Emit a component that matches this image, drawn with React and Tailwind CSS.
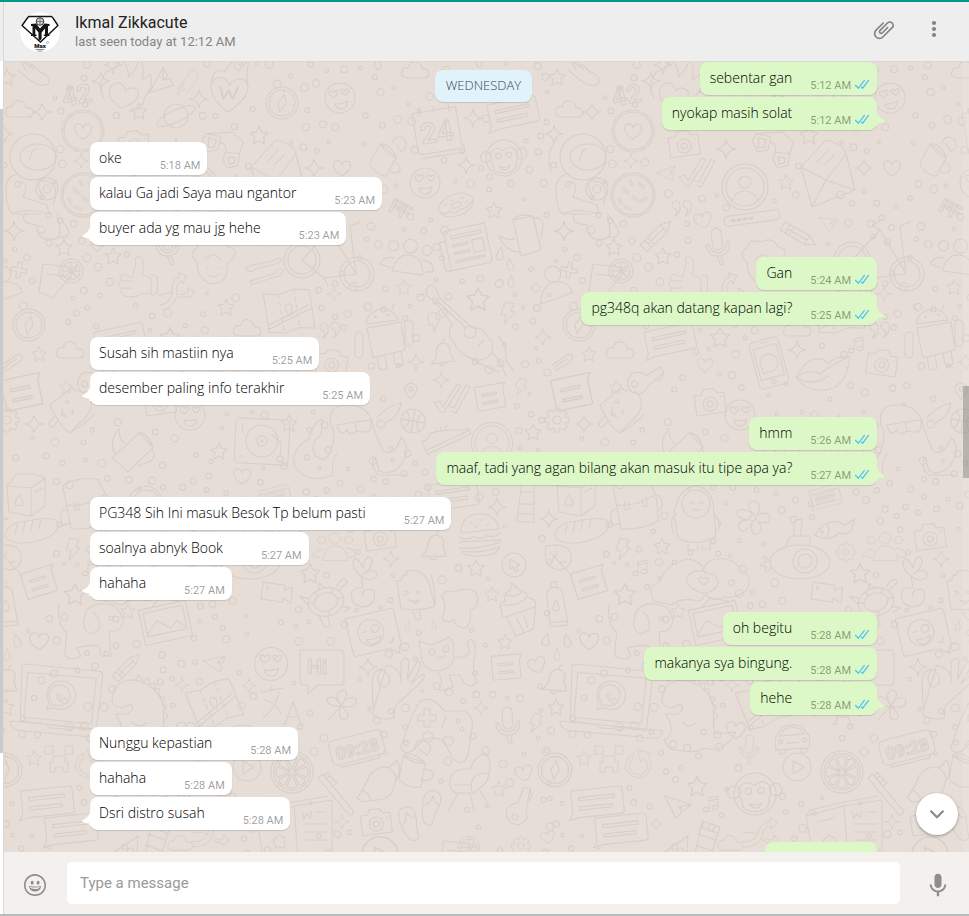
import { useState } from 'react';

const messageGroups = [
  {
    from: 'me',
    items: [
      { text: 'sebentar gan', time: '5:12 AM' },
      { text: 'nyokap masih solat', time: '5:12 AM' },
    ],
  },
  {
    from: 'them',
    items: [
      { text: 'oke', time: '5:18 AM' },
      { text: 'kalau Ga jadi Saya mau ngantor', time: '5:23 AM' },
      { text: 'buyer ada yg mau jg hehe', time: '5:23 AM' },
    ],
  },
  {
    from: 'me',
    items: [
      { text: 'Gan', time: '5:24 AM' },
      { text: 'pg348q akan datang kapan lagi?', time: '5:25 AM' },
    ],
  },
  {
    from: 'them',
    items: [
      { text: 'Susah sih mastiin nya', time: '5:25 AM' },
      { text: 'desember paling info terakhir', time: '5:25 AM' },
    ],
  },
  {
    from: 'me',
    items: [
      { text: 'hmm', time: '5:26 AM' },
      { text: 'maaf, tadi yang agan bilang akan masuk itu tipe apa ya?', time: '5:27 AM' },
    ],
  },
  {
    from: 'them',
    items: [
      { text: 'PG348 Sih Ini masuk Besok Tp belum pasti', time: '5:27 AM' },
      { text: 'soalnya abnyk Book', time: '5:27 AM' },
      { text: 'hahaha', time: '5:27 AM' },
    ],
  },
  {
    from: 'me',
    items: [
      { text: 'oh begitu', time: '5:28 AM' },
      { text: 'makanya sya bingung.', time: '5:28 AM' },
      { text: 'hehe', time: '5:28 AM' },
    ],
  },
  {
    from: 'them',
    items: [
      { text: 'Nunggu kepastian', time: '5:28 AM' },
      { text: 'hahaha', time: '5:28 AM' },
      { text: 'Dsri distro susah', time: '5:28 AM' },
    ],
  },
];

// --- WALLPAPER ---
const TILE_W = 550;
const TILE_H = 800;

const shapes = {
  star: <path d="M0-8L2.4-2.8 8-2 4 2 5 8 0 5.2-5 8-4 2-8-2-2.4-2.8Z" />,
  spark: <path d="M0-9Q1-1 9 0Q1 1 0 9Q-1 1-9 0Q-1-1 0-9Z" />,
  heart: <path d="M0 8C-14-1-8-9-3-7Q0-6 0-3Q1-7 5-7C11-6 10 2 0 8Z" />,
  drop: <path d="M0-7Q7 6 0 6Q-7 6 0-7Z" />,
  cloud: <path d="M-9 8Q-15 7-13 1Q-11-4-7-2Q-5-10 2-8Q7-6 7-1Q14-2 14 4Q13 8 9 8Z" />,
  bolt: <path d="M-3-11L6-9 3-2 7-1-4 11-2 2-7 1Z" />,
  music: <path d="M-3 6V-6L6-8V4M-3-3L6-5M-3 6A3 2 0 1 1-4 4M6 4A3 2 0 1 1 5 2" />,
  quotes: <path d="M-7 0A4 4 0 1 1-3-4Q-2 4-9 8Q-5 3-7 0ZM4-1A4 4 0 1 1 8-5Q9 3 2 7Q6 2 4-1Z" />,
  plus: <path d="M-2-8H2V-2H8V2H2V8H-2V2H-8V-2H-2Z" />,
  clip: <path d="M-10-3H8A3 3 0 0 1 8 4H-8A2 2 0 0 1-8 0H6" />,
  plane: <path d="M-14-8L14-4 8 3 2 0 6 6 1 12ZM2 0L14-4" />,
  pencil: <path d="M-20-5H8L18 0 8 5H-20ZM8-5V5M-14-5V5M-10-5V5M-14 0H8" />,
  bubble: (
    <>
      <path d="M-24-13H22Q25-13 25-10V10Q25 13 22 13H-18L-28 15-24 9Z" />
      <path d="M-17-6H17V-3H-17ZM-17 3H14V6H-17Z" />
    </>
  ),
  note: (
    <>
      <path d="M-15-12H16L13-7V12H-15Z" />
      <path d="M-9-4H6V-2H-9ZM-9 4H6V6H-9Z" />
    </>
  ),
  calendar: (
    <>
      <path d="M-22-20H22V18Q22 22 18 22H-18Q-22 22-22 18ZM-22-20V-14M-15-24V-17M0-24V-17M15-24V-17M-19 26H24V18" />
      <text x="-17" y="12" fontSize="29">24</text>
    </>
  ),
  monkey: (
    <>
      <circle r="20" />
      <circle cx="-20" cy="-3" r="6" />
      <circle cx="20" cy="-3" r="6" />
      <path d="M0-8C-12-18-19-3-13 5Q-14 16 0 17Q14 16 13 5C19-3 12-18 0-8Z" />
      <circle cx="-6" cy="-3" r="3" />
      <circle cx="6" cy="-3" r="3" />
      <path d="M-6 9Q0 12 6 9Q0 18-6 9Z" />
    </>
  ),
  astronaut: (
    <>
      <circle r="23" />
      <ellipse cx="5" rx="18" ry="13" />
      <path d="M-3 3Q-3-6 3-8M-16 17Q-28 20-27 35Q-26 54-20 57H8M-26-18Q-38-5-32 15M-20 57Q-8 50 16 57L14 48-10 40Q-3 25-14 25M10 40Q0 22 12 24Q28 26 20 48M-8 57Q-14 66 4 68Q4 84 18 82Q32 84 24 60M24 56L34 70Q40 82 24 80" />
      <circle cx="14" cy="32" r="11" />
      <circle cx="14" cy="32" r="4" />
    </>
  ),
  cookie: (
    <>
      <circle r="22" strokeDasharray="9 1" />
      <circle r="20" />
      <path d="M-9-6L-5-2M6-12L10-8M8 6L13 3M-8 12L-3 14M-14 4L-12 8M0 2L4 5M-3-14L-1-11" strokeWidth="4" strokeDasharray="none" opacity="0.5" />
    </>
  ),
  badge: (
    <>
      <circle r="21" strokeDasharray="7 2" />
      <circle r="19" />
      <path d="M0 8C-14-1-8-9-3-7Q0-6 0-3Q1-7 5-7C11-6 10 2 0 8Z" />
    </>
  ),
  lovely: (
    <>
      <circle r="15" />
      <path d="M-6-1C-13-6-9-9-7-8Q-5-7-5-6Q-4-9-2-8Q1-6-6-1ZM6-2C0-6 2-9 4-8Q6-7 6-6Q7-9 9-8Q12-6 6-2ZM-6 5Q0 7 7 4Q5 12 0 11Q-5 11-6 5Z" />
    </>
  ),
  donut: (
    <>
      <ellipse rx="20" ry="12" />
      <ellipse rx="6" ry="3" />
      <path d="M-20 0Q-15 8-9 4Q-3 10 3 6Q10 8 19 2M-12-3L-9-5M-4-7L-1-6M8-6L10-4M11 1L13 0" />
    </>
  ),
  camera: (
    <>
      <path d="M-15-8H-8L-5-13H5L8-8H15V12H-15Z" />
      <circle cy="2" r="7" />
      <circle cy="2" r="3" />
      <path d="M11-4H12" />
    </>
  ),
  glasses: (
    <>
      <path d="M-18-14L-3-13-4 0-14 4-21-6ZM4 2L18 1 18 13 8 17 2 9ZM-3-7Q4-8 4 2M-18-14L8-19 20-11M18 1L20-11" />
      <path d="M-15-10L-7-9-8-2-14 0ZM7 6H14V11L9 13Z" />
    </>
  ),
  envelope: (
    <>
      <path d="M-25-3L0-30Q18-26 20-16L29 20-14 37ZM-14 37L0 10 29 20M-25-3L0 10 20-16" />
      <path d="M-9-8L2-20M-2-5L8-15" />
    </>
  ),
  checks: <path d="M-18 5L-12 3-9 9 5-14 9-12-8 14-11 14ZM-3 8L2 10 14-13 18-11 4 15-1 13" />,
  person: (
    <>
      <circle r="23" />
      <circle r="19" />
      <circle cy="-5" r="6" />
      <path d="M-13 14Q-10 4 0 4Q10 4 13 14" />
    </>
  ),
  password: (
    <>
      <rect x="-28" y="-5" width="56" height="10" rx="4" />
      <path d="M-20 0H-18M-14 0H-12M-8 0H-6M-2 0H0" strokeWidth="3" />
    </>
  ),
  newspaper: (
    <>
      <path d="M-18-20H22V16Q22 20 18 20H-22Q-26 20-26 16V-10H-20V16Q-20 20-22 20M-18-20Q-20-20-20-16V16" />
      <path d="M-14-14H17V-11H-14ZM-14-5H2V-3H-14ZM-14 3H2V5H-14ZM-14 11H16V13H-14ZM6-6H17V7H6Z" />
    </>
  ),
  jug: <path d="M-12-18L8-22 16 12-4 18ZM-12-18Q-7-25 8-22M8-20Q18-22 18-12L16 0M-10 0Q-14 4-26-2-20 13-6 14" />,
  people: (
    <>
      <circle cy="-12" r="7" />
      <circle cx="-17" cy="-10" r="5" />
      <circle cx="17" cy="-10" r="5" />
      <path d="M-15 15Q-12-3 0-3Q14-3 16 15ZM-15 2Q-25 1-28 10L-17 12M14 0Q25 0 26 10L18 12" />
    </>
  ),
  mic: <path d="M-5-14A5 5 0 0 1 5-14V-2A5 5 0 0 1-5-2ZM-12-3Q-11 9 0 9Q11 9 12-4L9-4Q8 5 0 6Q-8 5-9-4ZM-2 9L0 18H3L2 9" />,
  thumb: <path d="M-2-3Q4-20 1-24Q6-29 10-22Q12-14 9-6L19-2V15H9Q4 20-10 18Q-17 15-14 9Q-20 4-14 1Q-18-6-10-6ZM19-6L26-4V15L19 17M-14 1H-2M-14 9H-2" />,
  baker: (
    <>
      <path d="M-16-2Q-26-10-16-16Q-14-26-2-22Q10-28 15-17Q26-16 20-6L14 1Q16 18 0 20Q-16 17-16-2Z" />
      <path d="M-8-4Q0-14 8-4M-6 4L-5 5M6 4L5 5M-5 11Q0 15 5 11" />
    </>
  ),
  bike: (
    <>
      <circle cx="-2" r="18" />
      <circle cx="-2" r="14" />
      <circle cx="53" cy="14" r="17" />
      <circle cx="53" cy="14" r="13" />
      <path d="M-2 0L26-30 52 14 20 18ZM26-30L18-35 28-40M52 14L46-34 56-38M20 18L24 26" />
    </>
  ),
  cocktail: (
    <>
      <path d="M-18-10L16-6-8 24-22 18ZM-14 0L8 3" />
      <circle cx="10" cy="-3" r="12" />
      <circle cx="10" cy="-3" r="9" />
      <path d="M1-3H19M10-12V6M4-9L16 3M16-9L4 3" />
    </>
  ),
  bust: (
    <>
      <circle cy="-16" r="8" />
      <path d="M-16 12Q-14-6 0-8Q14-8 17 5Z" />
    </>
  ),
  guitar: (
    <>
      <path d="M-44-42Q-40-50-35-44L-30-34 2-4Q15-5 18 6Q24 8 22 20Q14 32 0 26Q-14 20-16 10Q-24 4-18-8L-36-32Q-44-34-44-42Z" />
      <circle r="6" />
      <path d="M-34-32L-4-4M8 14L14 8M22 20Q30 28 36 44M28 4Q38 14 36 28L44 40M0 26Q16 36 30 40" />
    </>
  ),
  compass: (
    <>
      <circle r="16" />
      <circle r="13" />
      <circle cx="-8" cy="-18" r="4" />
      <path d="M1-9L4 0-1 9-4 0ZM0-12V-11M0 11V12M-12 0H-11M11 0H12" />
    </>
  ),
  bell: <path d="M-11 9Q-5 5-6-3Q-5-12 2-12Q9-11 8-2L12 6ZM-3 8Q0 14 5 7M1-12Q0-16 3-16" />,
  phone: (
    <>
      <rect x="-15" y="-24" width="30" height="48" rx="4" />
      <path d="M-12-17H12V15H-12ZM-3-21H3M-8 9Q-9 6-8 4A9 9 0 1 1-4 8Z" />
      <circle cy="19" r="2" />
    </>
  ),
  lips: <path d="M-28 6Q-18-14-6-13Q0-14 4-8Q10-16 26-16Q22 20-4 18Q-18 18-28 6ZM-28 6Q-16-4-4 2Q6-6 26-16M-26 7Q-8 14 4 4" />,
  android: (
    <>
      <path d="M-15-18Q-13-31 1-33Q14-32 17-22ZM-14-31L-18-37M11-32L13-38M-14-14L20-20 24 8-8 16ZM-4 15L-2 26Q2 30 6 26L4 13M12 11L14 22Q18 26 22 22L20 9" />
      <rect x="-26" y="-10" width="8" height="26" rx="4" />
      <rect x="24" y="-22" width="8" height="26" rx="4" />
      <path d="M-6-25H-5M7-27H8" strokeWidth="2" />
    </>
  ),
  map: (
    <>
      <path d="M-23-20L-8-17 8-20 23-17V22L8 19-8 22-23 19ZM-23 12L20-2M-23 16L22 2" />
      <path d="M-8-17V22M8-20V19" strokeDasharray="4 4" />
      <path d="M0 6Q-7-4 0-6Q7-4 0 6Z" />
    </>
  ),
  wrench: <path d="M-20-6L-12-8 14-8Q20-12 22-6L14-4-10-3Q-14 2-20-6ZM-18 9L12 6Q16 0 21 4Q18 11 12 10L-17 13Z" />,
  pin: (
    <>
      <path d="M0 8Q-12-5 0-8Q12-5 0 8Z" />
      <circle cy="-2" r="2" />
    </>
  ),
  ball: (
    <>
      <circle r="12" />
      <path d="M-12 0H12M0-12V12M-8-9Q0 0-8 9M8-9Q0 0 8 9" />
    </>
  ),
  shoe: <path d="M-24-4Q-16-2-12-8L6-3Q16 3 24 4V10H-24ZM-24 6H24M-8-6L-5-10M-3-5L0-9M2-4L5-8" />,
  gear: (
    <>
      <path d="M-2-12H2L3-8 7-10 10-7 8-3 12-2V2L8 3 10 7 7 10 3 8 2 12H-2L-3 8-7 10-10 7-8 3-12 2V-2L-8-3-10-7-7-10-3-8Z" />
      <circle r="4" />
    </>
  ),
  turntable: (
    <>
      <rect x="-27" y="-22" width="54" height="45" rx="4" />
      <circle r="16" />
      <circle r="5" />
      <circle r="1" />
      <path d="M10-6L19 0V14M-20-16V-8M-22 16H-18" />
      <circle cx="19" cy="17" r="3" />
    </>
  ),
  octopus: (
    <>
      <path d="M-24-6Q-28-26-8-26Q14-26 18-6Q22 8 28 20Q40 26 46 6Q56 16 48 30Q40 46 24 40L20 26M-24-6Q-18 4-24 20Q-30 34-40 24Q-46 12-34 4L-32-12Q-42-10-46 8Q-66 20-60 36Q-48 54-22 44M-22 44Q-24 30-18 22M20 26Q14 36 24 44H50M30-8Q44-14 46-28Q34-26 22-14" />
      <path d="M-18-6L0-9 2 0Q-6 6-8-2Q-14 8-18-6ZM0-9L16-11Q18 2 9 1L2 0" />
    </>
  ),
  burger: (
    <>
      <path d="M-18-4Q-16-22 0-22Q18-22 20-6ZM-20 0Q-12 5-6 0Q2 5 8 0Q16 3 22-2M-20 5H22M-20 11Q0 14 22 7M-18 14Q0 18 20 12Q18 20 0 20Q-16 20-18 14Z" />
      <path d="M-8-13H-6M2-16H4M8-11H10M-3-9H-1" />
    </>
  ),
  tower: <path d="M-8 22L-5-20H7L9 22ZM-6-8H8M-7 4H8M-7 14H9M-9-20H10L6-28H-4Z" />,
  carton: <path d="M-18-12L6-10 20-20V8L6 18-16 14ZM6-10V18M-18-12L-8-24 10-24 20-20M-6-3Q2 8-6 8Q-14 8-6-3ZM10-6L17-10" />,
  bread: <path d="M-26 6Q-26-8-4-10Q24-16 28-8Q28 4 6 10Q-18 16-26 6ZM-14-6L-16 3M-6-10L-8 1M2-11L0-1M10-12L8-2" />,
  backpack: <path d="M-22-24Q-4-32 14-26L20-10V16Q0 24-18 20ZM-20-4Q2 0 18-10M-22 0Q-30 2-26 16L-18 14M20-10Q28-8 24 4L20 6M-12-6V2H-8V-5M6-8V0H10V-9" />,
  girl: (
    <>
      <path d="M-16 24L-20 0Q-16-28 4-28Q20-24 20 0L22 22Q4 34-16 24ZM-18 0Q-26 6-20 20M20 0Q28 8 24 16" />
      <circle cx="2" cy="-10" r="14" />
      <path d="M-4-11Q-2-13 0-11M5-11Q7-13 9-11M-1-5Q3-2 6-5M-6 30V36H4V31M8 31V35H16V28" />
    </>
  ),
  flower: (
    <>
      <path d="M0-4Q-9-16 1-17Q10-14 4-3Q16-8 17 0Q16 8 5 3Q12 14 4 16Q-3 17-1 5Q-10 18-14 10Q-16 2-4 2Q-18 0-16-7Q-10-11 0-4Z" />
      <circle r="3" />
    </>
  ),
  submarine: (
    <>
      <ellipse cx="10" cy="4" rx="30" ry="17" />
      <circle cx="15" cy="3" r="12" />
      <circle cx="15" cy="3" r="7" />
      <path d="M-4-12L0-22H20V-12M4-22V-36L12-40V-36L10-22M-20 4Q-30-8-24 4Q-36 8-24 8Q-26 20-18 8" />
    </>
  ),
  fish: (
    <>
      <path d="M-20 6Q-6-14 10-4L20-10 16 2Q10 6 4 4Q-8 14-20 6ZM-8-6Q-4 0-8 8" />
      <circle cx="-13" cy="3" r="1" />
    </>
  ),
  leaf: <path d="M-12-14Q12-18 13-4Q14 8 2 10Q-16 8-12-14ZM-8-8L14 16M-2-3V-9M2 2H8M-4-5L-6 3" />,
  hands: (
    <>
      <path d="M-46 24Q-54 10-40 4Q-34-14-12-18Q2-16 4-6Q-10-8-14 2Q-10 14 4 16Q6 22-2 24Q-20 20-28 28ZM46 14Q54 0 42-6Q30-24 10-16Q0-8 6-4Q18-4 18 6Q16 14 6 16Q10 26 24 20Q34 22 46 14Z" />
      <path d="M4 8Q-4 2 1 0Q3 0 4 2Q6-1 8 1Q10 3 4 8Z" />
    </>
  ),
  turtle: (
    <>
      <ellipse rx="18" ry="14" />
      <ellipse rx="12" ry="9" />
      <path d="M16-8L26-14Q24-22 14-12M-16-8L-24-12-18-2M-10 12L-8 24H-2V14M14 8L22 12 14 14M-4-14L-2-20 2-14M-12-2L-18-4M12 0H18M0 9V14M-6-8L-8-12M7-7L10-11" />
    </>
  ),
  sprout: <path d="M-2-6Q-14-16-8-24Q-2-20 0-14Q2-28 8-24Q12-16 0-8Q14-16 14-6Q8 2-2-6L0 6Q-16 4-10 20Q0 30 10 20Q16 4 2 8Q-2 12 0 14" />,
  cursor: (
    <>
      <circle r="12" />
      <path d="M-4-6L6 0 2 1 4 6 1 7-1 2-4 4Z" />
    </>
  ),
  bottle: <path d="M-8-12Q-8-18 0-19Q8-18 8-12L10 20H-8ZM-3-19V-24H3V-19M0-6Q6 5 0 5Q-6 5 0-6ZM-8 16H10" />,
  dog: (
    <>
      <path d="M-30-22Q-32 0-22 6Q-24 20-24 30Q-16 36-8 30L-12 22Q0 18 10 20L12 30H22L20 6Q32 6 34-4Q32-20 18-22Q6-24-2-16Q-10 4 2 8L10 4Q12-8 4-14" />
      <circle cx="22" cy="-8" r="2" />
    </>
  ),
  photo: (
    <>
      <path d="M-24-16H24V20H-24ZM-20-12H20V12H-20ZM-20 10L-8-2 4 8 12 2 20 10M-10-16L0-24 18-16" />
    </>
  ),
  video: <path d="M-14-8H8V-3L16-7V9L8 5V9H-14ZM-10-3A1 1 0 1 1-8-3A1 1 0 1 1-10-3" />,
  wink: (
    <>
      <path d="M-24-20H22Q25-20 25-17V16Q25 19 22 19V26L12 19H-21Q-24 19-24 16Z" />
      <circle cx="-2" cy="-1" r="13" />
      <circle cx="3" cy="-4" r="4" />
      <path d="M-10-3H-6M-8 5Q0 7 7 4Q4 12-2 11Q-7 10-8 5ZM14 12L16 14 19 9" />
    </>
  ),
  icepop: <path d="M-16 14L-20-14Q-14-14-14-20Q-10-18-10-24Q10-28 14-4L18 10Q12 16-16 14ZM14-20Q18-8 18 10M-4 16L-1 24Q4 26 4 22L2 15M-12-4L-8-3-12 0M2-4L-1-3 3-1M-8 5Q-3 8 3 5M-4 6Q-2 12 1 6" />,
  blob: <path d="M-18 14Q-12 4-18-8Q-16-14-8-12Q16-20 18-6Q18 4 10 6Q12 22 4 24Q-6 22-6 16Q-14 20-18 14Z" />,
  cupcake: <path d="M-16-2Q-20-10-12-12Q-14-20-6-22L-4-30Q0-24 6-20Q12-18 10-14Q20-12 18-4L14 18-4 24-12 4Q-18 4-16-2ZM-12 4L18-4M-14-8Q2-6 10-14M-10-18Q0-14 6-20M-2 6L4 20M6 4L8 16" />,
  cat: (
    <>
      <path d="M-32-22L-20-18Q-8-22-2-26Q4-22 2-12Q6 4-12 8Q-30 8-30-10ZM4-6Q20-4 18-16Q14-22 20-24Q26-20 24-8Q20 10 26 20Q16 26 12 18L8 12H-2L2 24Q-8 30-12 26Q-6 18-14 8" />
      <circle cx="-19" cy="-11" r="3" />
      <circle cx="-5" cy="-14" r="3" />
      <path d="M-14-7Q-12-3-10-6Q-8-4-6-8" />
    </>
  ),
  hi: (
    <>
      <path d="M-22-16H18Q22-16 22-12V16Q22 19 18 19H-4L-14 28V19H-18Q-22 19-22 15Z" />
      <text x="-15" y="8" fontSize="21">Hi</text>
    </>
  ),
  laptop: (
    <>
      <path d="M-42-38Q-42-40-38-40L40-32Q43-31 43-28L36 30 -44 20ZM-36-31L36-25 31 23-40 16ZM-55 20L53 30Q52 40 42 38L-46 30Q-54 28-55 20ZM-16 24L-14 27 10 29 12 26" />
      <path d="M-16 8L-14 0A15 15 0 1 1-8 6Z" />
      <path d="M-12 4L-11 0A11 11 0 1 1-7 3ZM-5-9Q-7-1 4 2Q8 0 3-4L0-2-3-5Q0-8-5-9Z" />
    </>
  ),
  dino: <path d="M-28-6Q-28-28-6-28Q18-24 24 0Q22 20 26 26L46 24Q34 46 14 40Q6 46-14 42Q-22 42-26 32Q-16 28-20 14L-24 6-12 6Q-4 0-10-4Q-22 4-28-6ZM-4-28L-2-33 4-27 8-30 10-24 15-25 15-19 20-19 19-12 25-10 22-4 27-1 23 4 28 8 24 13M-8 14Q0 22 6 14" />,
  glyphA: <path d="M-20-14L2-18M-10-20L-9-16M-16-6Q-4-2 0 8M-2-14Q-6 4-18 12M4 18L12-4 20 18M8 11H17M1 18H7M17 18H23" />,
  clover: <path d="M0 0Q-14 2-14-8Q-6-12 0 0Q-8-14 2-16Q10-14 0 0Q6-12 15-7Q16 4 0 0Q12 10 4 14Q-4 14 0 0L-13 14" />,
  okhand: <path d="M-20 26L-22 6Q-26-12-14-14Q-4-8-6 0Q-12 8-16 0Q-20-6-14-14M-10-18Q6-16 6-2L4-22Q8-30 12-24L12-6 20-24Q26-26 22-14L16-2 26-12Q32-12 24-2L2 22V34Q-10 38-20 32Z" />,
  gamepad: (
    <>
      <path d="M-35 18Q-26-12-16-28Q-2-34 8-18L28-18Q38-14 36 0L32 26Q26 40 16 28L8 12Q-4 6-14 12L-24 22Q-34 26-35 18Z" />
      <path d="M-12-20H-6V-14H0V-8H-6V-2H-12V-8H-18V-14H-12ZM6-2L10-12" />
      <circle cx="-8" cy="8" r="5" />
      <circle cx="12" cy="12" r="5" />
      <circle cx="22" cy="-8" r="2" />
      <circle cx="26" cy="0" r="2" />
    </>
  ),
  clock: (
    <>
      <rect x="-27" y="-13" width="54" height="25" rx="5" />
      <path d="M-20 12V15H20V12" />
      <text x="-22" y="7" fontSize="17">09:28</text>
    </>
  ),
  croissant: <path d="M-22 14Q-12 0-10-8Q0-20 10-16L18-24Q24-12 16-2Q14 16-2 16L-16 18ZM-16 6Q-8 12-8 17M10-16Q20-8 16-2" />,
  mug: <path d="M-14-14L8-6 4 18Q-10 20-18 10ZM-14-14Q-4-18 8-6M-14-14Q-4-4 8-6M6 0Q18 0 16 8Q10 14 4 10M-2-20Q-2-30 8-28Q18-22 10-14L2-20" />,
  chair: <path d="M-20 0Q-18-14 0-12Q4-24 16-28Q24-16 16 2L4 12H-14Q-22 8-20 0ZM-12 12L-22 30M0 12L4 30M10 10L20 26M2 10Q-2-8 18-8M-16 4H0" />,
  key: (
    <>
      <path d="M6-22L12-20 8 2Q12 12 0 16Q-12 14-12 2Q-8-6 0-6ZM12-20L14-12 10-8" />
      <circle cx="-3" cy="8" r="3" />
    </>
  ),
  sandal: <path d="M-4-17Q10-20 8-4Q4 8 4 16Q-4 20-7 10Q-12-12-4-17ZM0-12Q-2-4-7-2M0-12Q4-4 8-4" />,
  brush: <path d="M-26-3H22Q26 0 22 3H-26ZM-24-3V-8H-10V-3M-20-8V-3M-15-8V-3" />,
  creeper: <path d="M-14-12H-6V-4H-14ZM6-12H14V-4H6ZM-6-2H6V4H9V14H4V9H-4V14H-9V4H-6Z" />,
  reload: <path d="M-6-14A14 14 0 1 0 10-10L14-14-2-18 2-4 6-8A10 10 0 1 1-6-9Z" />,
  orange: (
    <>
      <circle r="21" />
      <circle r="18" />
      <path d="M0-2L-5-14Q0-18 5-14ZM2-1L7-13Q12-14 13-8ZM2 0L14-5Q18 0 14 5ZM2 2L13 7Q13 13 7 13ZM0 2L5 14Q0 18-5 14ZM-2 2L-7 13Q-13 13-13 7ZM-2 0L-14 5Q-18 0-14-5ZM-2-1L-13-7Q-12-13-7-13Z" />
    </>
  ),
  play: (
    <>
      <circle r="14" />
      <path d="M-4-6L7 0-4 7Z" />
    </>
  ),
  car: (
    <>
      <path d="M-17 14V2L-10-8Q0-12 10-8L17 2V14ZM-12 0L-8-6Q0-9 8-6L12 0ZM-14 14V18H-8V14M8 14V18H14V14M-6 8H6" />
      <circle cx="-12" cy="6" r="2" />
      <circle cx="12" cy="6" r="2" />
    </>
  ),
  book: (
    <>
      <path d="M-38-12L0-22 38-28V24L2 30-30 34ZM0-22L4 30M-38-12L-34-18 0-26 34-32M8-16L10-9 13-15 16-10 18-17M22-16H32M10-4H33M11 4H33M12 12H33M-26-6L-10-10M-18 18Q-24 12-18 10Q-16 4-12 9Q-6 10-10 15Q-8 22-14 19Q-20 22-18 18Z" />
    </>
  ),
  arrows: <path d="M-24 12Q-8 14-4-2Q2-12 8-10V-15L16-9 9-2V-6Q0-4 0 4Q-4 18-22 18M-22 2Q-12 0-6 4M2 8Q8 12 12 8V4L18 11 10 16V13Q4 14 0 10" />,
  pizza: <path d="M-20 14L18-12 16 18ZM-14 10L12 12M4 2A3 3 0 1 1 5 2M10 6A3 3 0 1 1 11 6" />,
  sock: <path d="M-8 22L0-16 18-10 8 22ZM-2-10L15-4M-4-3L13 3M-6 8L10 14M2-15L0-10M8-13L6-8M13-11L11-6" />,
  swipe: <path d="M-18-10Q-12-14-4-4L-2-8 6 0Q18 4 14 12Q6 16-4 8L-16-2M-14-12L-8-2M-8-12L0-2" />,
  flames: <path d="M-20 22Q-32 12-26-4Q-18-10-16-20Q-6-14-4-6Q2-16 0-28Q8-22 10-8L16-16Q24-4 18 8Q22 20 8 26M-14 20Q-22 8-10 2Q-4 4-2 8Q2 0 10 4Q16 14-1 26Z" />,
  planet: (
    <>
      <circle r="12" />
      <ellipse rx="21" ry="6" transform="rotate(-25)" />
    </>
  ),
  bigHeart: (
    <>
      <path d="M0 22C-26 4-20-12-8-12Q-1-10 0-4Q3-12 12-12C24-8 20 8 0 22Z" />
      <path d="M-9-3L-5 9 0 0 4 9 9-4" strokeWidth="2" />
      <path d="M-18-8Q-16-22-6-18L2-30Q4-20 8-20L18-32Q16-20 18-8" />
    </>
  ),
};

// [shape, x, y, rotation, scale]
const doodles = [
  ['star', 7, 77, 0, 1], ['swipe', 34, 72, 0, 1], ['spark', 113, 65, 0, 1], ['spark', 101, 81, 0, 1],
  ['flames', 130, 84, 20, 1], ['plane', 162, 82, -70, 1], ['swipe', 187, 82, -90, 0.8], ['bigHeart', 229, 90, 4, 1],
  ['cloud', 415, 70, 0, 1], ['cloud', 19, 109, 0, 1], ['spark', 42, 112, 0, 1], ['badge', 83, 131, 0, 1],
  ['star', 139, 111, 0, 1], ['planet', 176, 116, 0, 1], ['spark', 199, 99, 0, 1], ['calendar', 437, 130, -9, 1],
  ['spark', 473, 118, 0, 1], ['bubble', 513, 113, -12, 1], ['spark', 554, 134, 0, 1], ['compass', 282, 103, 10, 1],
  ['lovely', 340, 98, -8, 1], ['monkey', 504, 158, -6, 0.9], ['astronaut', 33, 157, 0, 1], ['spark', 81, 161, 0, 0.8],
  ['cookie', 83, 195, 0, 1], ['spark', 466, 165, 0, 1], ['lovely', 425, 183, 0, 1], ['donut', 456, 205, -20, 0.9],
  ['star', 494, 210, 0, 1], ['camera', 134, 144, -8, 1], ['glasses', 222, 150, 8, 1], ['spark', 176, 149, 0, 1.1],
  ['star', 259, 135, 0, 1.1], ['envelope', 276, 170, 0, 1], ['checks', 147, 172, 0, 1], ['plane', 118, 173, -30, 0.7],
  ['person', 195, 187, 0, 1], ['star', 236, 182, 0, 0.9], ['spark', 314, 168, 0, 1], ['heart', 342, 168, 0, 1],
  ['mug', 388, 160, 20, 0.9], ['quotes', 133, 209, 0, 1], ['heart', 153, 220, -15, 1], ['password', 202, 218, -8, 1],
  ['pencil', 108, 234, -45, 1], ['pencil', 250, 236, 30, 1], ['plane', 279, 223, 0, 0.7], ['newspaper', 467, 247, -12, 1],
  ['jug', 525, 238, 0, 1], ['spark', 14, 231, 0, 1.1], ['people', 409, 258, 8, 1], ['drop', 500, 254, 10, 1],
  ['drop', 510, 265, -10, 0.9], ['drop', 511, 282, 0, 0.9], ['star', 64, 247, 0, 1], ['star', 113, 256, 0, 1],
  ['mic', 168, 247, -8, 1], ['thumb', 134, 280, 0, 0.9], ['baker', 213, 264, 0, 1], ['bike', 304, 260, 0, 1],
  ['cocktail', 61, 274, 0, 1], ['bust', 5, 290, -8, 1], ['plus', 19, 270, 10, 1], ['star', 404, 287, 0, 0.9],
  ['star', 478, 299, 0, 1.4], ['arrows', 176, 288, -20, 0.9], ['guitar', 470, 332, 0, 1], ['bolt', 508, 313, 0, 1],
  ['bolt', 434, 322, -20, 0.9], ['compass', 29, 325, 8, 1], ['bell', 442, 355, 0, 1], ['spark', 416, 362, 0, 0.9],
  ['spark', 543, 337, 0, 0.9], ['spark', 441, 380, 0, 0.9], ['star', 39, 354, 0, 0.9], ['clip', 12, 362, -35, 1],
  ['cloud', 70, 350, 0, 1], ['bubble', 120, 340, -12, 1], ['star', 170, 337, 0, 1.2], ['phone', 219, 363, -15, 1],
  ['lips', 274, 372, 0, 1], ['music', 307, 345, 0, 1], ['spark', 247, 350, 0, 1], ['heart', 155, 365, 0, 0.9],
  ['camera', 332, 363, 8, 1], ['android', 381, 342, 0, 1], ['quotes', 331, 331, 0, 1], ['map', 289, 310, -9, 1],
  ['star', 226, 307, 0, 1], ['cloud', 247, 328, 0, 1], ['spark', 334, 294, 0, 0.8], ['wrench', 264, 270, -12, 0.9],
  ['checks', 452, 398, 0, 1], ['note', 491, 397, -10, 1], ['bolt', 521, 387, 10, 0.8], ['pin', 411, 391, 0, 1],
  ['note', 23, 392, -12, 1.3], ['key', 92, 380, 40, 1], ['star', 66, 387, 0, 0.8], ['ball', 413, 421, 10, 1],
  ['shoe', 445, 435, -25, 1], ['person', 492, 443, 0, 0.9], ['gear', 7, 420, 0, 1], ['star', 533, 432, 0, 1],
  ['spark', 34, 424, 0, 1], ['icepop', 70, 412, 60, 1], ['turntable', 262, 441, 3, 1], ['star', 289, 423, 0, 1],
  ['octopus', 355, 431, 0, 1], ['bubble', 275, 495, -15, 0.6], ['heart', 242, 476, 0, 1], ['star', 219, 451, 0, 1],
  ['camera', 160, 402, -8, 1], ['jug', 130, 452, 60, 1], ['lovely', 190, 415, 0, 1], ['bubble', 453, 495, -8, 1],
  ['burger', 479, 536, -3, 1], ['tower', 526, 500, 3, 1], ['spark', 497, 507, 0, 1], ['spark', 549, 519, 0, 1],
  ['carton', 25, 498, 0, 1], ['bread', 31, 531, 0, 1], ['backpack', 87, 507, -6, 1], ['girl', 144, 514, 0, 1],
  ['flower', 203, 518, 0, 1], ['fish', 285, 529, 0, 1], ['submarine', 240, 558, 0, 1], ['bubble', 276, 499, -14, 0.6],
  ['camera', 380, 537, -8, 1], ['people', 335, 548, 0, 0.8], ['star', 112, 546, 0, 1], ['bolt', 73, 549, 0, 1],
  ['leaf', 8, 560, 0, 1], ['hands', 150, 577, 0, 1], ['gear', 296, 552, 0, 0.8], ['star', 310, 573, 0, 1.2],
  ['spark', 391, 559, 0, 0.9], ['turtle', 326, 602, -15, 1], ['sprout', 363, 582, 0, 1], ['note', 40, 582, -17, 1.1],
  ['music', 91, 568, 0, 1], ['bell', 434, 548, 8, 1.1], ['cursor', 514, 565, 0, 1], ['star', 476, 568, 0, 1],
  ['bottle', 6, 606, -6, 1], ['star', 75, 594, 0, 1.3], ['dog', 89, 626, 0, 1], ['star', 128, 611, 0, 0.9],
  ['photo', 165, 621, -12, 1], ['video', 276, 592, 8, 1], ['wink', 373, 633, -13, 1], ['icepop', 417, 595, 0, 1],
  ['blob', 460, 604, 0, 1], ['cupcake', 518, 612, -5, 1], ['star', 492, 594, 0, 0.9], ['star', 505, 642, 0, 0.9],
  ['drop', 408, 626, 15, 0.7], ['drop', 434, 625, -10, 0.7], ['drop', 546, 640, 15, 1], ['drop', 17, 641, -15, 1],
  ['drop', 7, 655, 0, 0.9], ['heart', 39, 641, 0, 1.1], ['cat', 451, 663, 0, 1], ['hi', 322, 666, 0, 1],
  ['note', 507, 667, -5, 1], ['heart', 537, 665, -20, 1], ['bell', 5, 682, 12, 1.1], ['star', 6, 707, 0, 1],
  ['laptop', 62, 702, 0, 0.95], ['dino', 140, 708, 0, 1], ['map', 214, 703, -22, 1], ['lovely', 271, 664, 0, 1.1],
  ['glyphA', 281, 706, 0, 1], ['clover', 341, 706, 0, 1], ['spark', 368, 667, 0, 1], ['okhand', 395, 684, 5, 1],
  ['gamepad', 436, 729, 0, 1], ['mic', 508, 726, -4, 1], ['bolt', 536, 723, 10, 0.9], ['spark', 481, 708, 0, 0.8],
  ['spark', 182, 685, 0, 0.8], ['spark', 249, 686, 0, 0.8], ['pencil', 128, 666, -45, 0.9], ['plane', 216, 663, -20, 0.8],
  ['clock', 357, 748, -14, 1], ['croissant', 379, 784, 0, 1], ['mug', 417, 769, 0, 1], ['chair', 470, 781, 0, 1],
  ['key', 518, 809, 0, 1], ['compass', 5, 770, 0, 1.05], ['creeper', 59, 758, 0, 1], ['star', 34, 758, 0, 0.9],
  ['reload', 89, 766, 0, 0.9], ['heart', 524, 773, -15, 1], ['star', 499, 789, 0, 0.9], ['sandal', 431, 808, 10, 1],
  ['sandal', 410, 824, -20, 1], ['camera', 376, 822, -8, 1], ['brush', 337, 796, 50, 1], ['spark', 342, 822, 0, 0.8],
  ['orange', 292, 772, 0, 1], ['play', 247, 767, 0, 1], ['mic', 199, 750, 4, 0.8], ['car', 242, 735, -4, 1],
  ['heart', 186, 730, 0, 1.1], ['monkey', 205, 794, -4, 1.05], ['star', 147, 786, 0, 1.2], ['bubble', 47, 802, -6, 1.05],
  ['bubble', 71, 829, -6, 1.05], ['plane', 127, 806, 10, 1], ['music', 162, 804, 0, 1], ['book', 294, 828, 0, 1],
  ['arrows', 213, 831, 0, 0.9], ['cloud', 180, 843, 0, 0.9], ['pizza', 120, 848, 0, 1], ['sock', 152, 837, 0, 1],
  ['cocktail', 460, 850, 0, 0.9], ['play', 380, 855, 0, 1.3], ['gear', 521, 846, 0, 0.8], ['heart', 548, 837, -15, 0.8],
];

// small bubbles that fill the room between the doodles
function scatterDots() {
  const dots = [];
  let seed = 7;
  const next = () => {
    seed = (seed * 16807) % 2147483647;
    return seed / 2147483647;
  };
  for (let i = 0; i < 2600; i++) {
    const x = next() * TILE_W;
    const y = 62 + next() * TILE_H;
    const r = 1.5 + next() * 2.5;
    const tooClose =
      doodles.some(([name, dx, dy, , s]) => {
        const small = ['star', 'spark', 'heart', 'drop', 'bolt', 'music', 'plus', 'quotes', 'pin'].includes(name);
        return Math.hypot(dx - x, dy - y) < (small ? 13 : 26) * s;
      }) || dots.some((d) => Math.hypot(d.x - x, d.y - y) < 12);
    if (!tooClose) dots.push({ x, y, r });
  }
  return dots;
}

const dots = scatterDots();

function Wallpaper() {
  return (
    <svg className="absolute inset-0 h-full w-full" aria-hidden="true">
      <defs>
        <g id="doodles" fontFamily="Roboto, sans-serif" fontWeight="700">
          {doodles.map(([name, x, y, rot, s], i) => (
            <g key={i} transform={`translate(${x} ${y}) rotate(${rot}) scale(${s})`}>
              {shapes[name]}
            </g>
          ))}
          <text x="62" y="104" fontSize="26" transform="rotate(-10 78 96)">42</text>
          <text x="390" y="216" fontSize="20" transform="rotate(28 400 208)">FF</text>
          {dots.map((d, i) => (
            <circle key={i} cx={d.x} cy={d.y} r={d.r} />
          ))}
        </g>
        <pattern id="wallpaper" width={TILE_W} height={TILE_H} patternUnits="userSpaceOnUse" patternTransform="translate(-4 0)">
          <g fill="none" stroke="#d8cfc8" strokeWidth="1.100" strokeLinejoin="round" strokeLinecap="round" transform="translate(0 -62)">
            <use href="#doodles" x={-TILE_W} />
            <use href="#doodles" />
            <use href="#doodles" x={TILE_W} />
          </g>
        </pattern>
      </defs>
      <rect width="100%" height="100%" fill="url(#wallpaper)" />
    </svg>
  );
}

// --- ICONS ---
function Avatar() {
  return (
    <svg viewBox="0 0 40 40" className="size-10 shrink-0 rounded-full" role="img" aria-label="Ikmal Zikkacute">
      <circle cx="20" cy="20" r="20" fill="#fefefe" />
      <path d="M8.500 4.500H32L38 13.500 20.500 30 2 13.500Z" fill="none" stroke="#141414" strokeWidth="1.500" />
      <path d="M11 12L16 11.500 20 16.500 24.500 11.500 29.500 12V14H28V22.500H29.500V24H23.800V22.500H25V16.500L21.600 20.500V27L20 28.500 18.500 27V20.500L15.300 16.500V22.500H16.500V24H11V22.500H12.500V14H11Z" fill="#141414" />
      <circle cx="20" cy="9.500" r="3.800" fill="#d8d8d8" stroke="#333" strokeWidth="1" />
      <path d="M20 6V13M16.500 9.500H23.500" stroke="#555" strokeWidth="0.700" />
      <text x="20" y="36" textAnchor="middle" fontSize="6" fontWeight="900" fontFamily="Roboto, sans-serif" fill="#141414">Max</text>
      <path d="M15.500 37.500H24.500M17.500 39H22.500" stroke="#777" strokeWidth="0.800" />
      <circle cx="27.500" cy="30.500" r="1" fill="none" stroke="#777" strokeWidth="0.500" />
    </svg>
  );
}

function ClipIcon() {
  return (
    <svg viewBox="0 0 24 24" className="size-6" fill="currentColor" aria-hidden="true">
      <path d="M1.816 15.556v.002c0 1.502.584 2.912 1.646 3.972s2.472 1.647 3.974 1.647a5.58 5.58 0 0 0 3.972-1.645l9.547-9.548c.769-.768 1.147-1.767 1.058-2.817-.079-.968-.548-1.927-1.319-2.698-1.594-1.592-4.068-1.711-5.517-.262l-7.916 7.915c-.881.881-.792 2.25.214 3.261.959.958 2.423 1.053 3.263.215l5.511-5.512c.28-.28.267-.722.053-.936l-.244-.244c-.191-.191-.567-.349-.957.04l-5.506 5.506c-.18.18-.635.127-.976-.214-.098-.097-.576-.613-.213-.973l7.915-7.917c.818-.817 2.267-.699 3.23.262.5.501.802 1.1.849 1.685.051.573-.156 1.111-.589 1.543l-9.547 9.549a3.97 3.97 0 0 1-2.829 1.171 3.975 3.975 0 0 1-2.83-1.173 3.973 3.973 0 0 1-1.172-2.828c0-1.071.415-2.076 1.172-2.83l7.209-7.211c.157-.157.264-.579.028-.814L11.5 4.36a.572.572 0 0 0-.834.018l-7.205 7.207a5.577 5.577 0 0 0-1.645 3.971z" />
    </svg>
  );
}

function MenuIcon() {
  return (
    <svg viewBox="0 0 24 24" className="size-6" fill="currentColor" aria-hidden="true">
      <circle cx="12" cy="5" r="2.100" />
      <circle cx="12" cy="11" r="2.100" />
      <circle cx="12" cy="17" r="2.100" />
    </svg>
  );
}

function SmileyIcon() {
  return (
    <svg viewBox="0 0 24 24" className="size-6" fill="currentColor" aria-hidden="true">
      <path d="M9.153 11.603c.795 0 1.439-.879 1.439-1.962s-.644-1.962-1.439-1.962-1.439.879-1.439 1.962.644 1.962 1.439 1.962zm-3.204 1.362c-.026-.307-.131 5.218 6.063 5.551 6.066-.25 6.066-5.551 6.066-5.551-6.078 1.416-12.129 0-12.129 0zm11.363 1.108s-.669 1.959-5.051 1.959c-3.505 0-5.388-1.164-5.607-1.959 0 0 5.912 1.055 10.658 0zM11.804 1.011C5.609 1.011.978 6.033.978 12.228s4.826 10.761 11.021 10.761S23.02 18.423 23.02 12.228c.001-6.195-5.021-11.217-11.216-11.217zM12 21.354c-5.273 0-9.381-3.886-9.381-9.159s3.942-9.548 9.215-9.548 9.548 4.275 9.548 9.548c-.001 5.272-4.109 9.159-9.382 9.159zm3.108-9.751c.795 0 1.439-.879 1.439-1.962s-.644-1.962-1.439-1.962-1.439.879-1.439 1.962.644 1.962 1.439 1.962z" />
    </svg>
  );
}

function MicIcon() {
  return (
    <svg viewBox="0 0 24 24" className="size-6" fill="currentColor" aria-hidden="true">
      <path d="M11.999 14.942c2.001 0 3.531-1.53 3.531-3.531V4.35c0-2.001-1.53-3.531-3.531-3.531S8.469 2.35 8.469 4.35v7.061c0 2.001 1.53 3.531 3.53 3.531zm6.238-3.53c0 3.531-2.942 6.002-6.237 6.002s-6.237-2.471-6.237-6.002H3.761c0 4.001 3.178 7.297 7.061 7.885v3.884h2.354v-3.884c3.884-.588 7.061-3.884 7.061-7.885h-2z" />
    </svg>
  );
}

function ReadTicks() {
  return (
    <svg viewBox="0 0 16 15" className="h-[15px] w-4" fill="#4fc3f7" role="img" aria-label="Read">
      <path d="M15.01 3.316l-.478-.372a.365.365 0 0 0-.51.063L8.666 9.879a.32.32 0 0 1-.484.033l-.358-.325a.319.319 0 0 0-.484.032l-.378.483a.418.418 0 0 0 .036.541l1.32 1.266c.143.14.361.125.484-.033l6.272-8.048a.366.366 0 0 0-.064-.512zm-4.1 0l-.478-.372a.365.365 0 0 0-.51.063L4.566 9.879a.32.32 0 0 1-.484.033L1.891 7.769a.366.366 0 0 0-.515.006l-.423.433a.364.364 0 0 0 .006.514l3.258 3.185c.143.14.361.125.484-.033l6.272-8.048a.365.365 0 0 0-.063-.51z" />
    </svg>
  );
}

function Bubble({ message, mine, last }) {
  return (
    <div
      className={`relative flex h-[33px] w-fit rounded-lg pr-[7px] shadow-[0_1px_1px_rgba(0,0,0,0.13)] ${
        mine ? 'gap-[18px] self-end bg-[#dcf8c6] pl-[10px]' : 'gap-[38px] bg-white pl-[9px]'
      }`}
    >
      {last && (
        <svg
          viewBox="0 0 9 14"
          className={`absolute bottom-1 h-[14px] w-[9px] ${mine ? '-right-2 text-[#dcf8c6]' : '-left-2 -scale-x-100 text-white'}`}
          fill="currentColor"
          aria-hidden="true"
        >
          <path d="M0 0H1Q2.500 6 9 8.500Q9 10.500 2 11.500L1 14H0Z" />
        </svg>
      )}
      <p className="font-['Open_Sans',sans-serif] text-[14px] font-light leading-8 text-black">{message.text}</p>
      <span className="flex items-end gap-[3px] pb-[3px] font-['Roboto',sans-serif] text-[11px] leading-[13px] text-black/40">
        <time>{message.time}</time>
        {mine && <ReadTicks />}
      </span>
    </div>
  );
}

export default function App() {
  const [draft, setDraft] = useState('');

  return (
    <div className="flex h-screen flex-col border-t-2 border-b-2 border-t-[#009688] border-b-[#b4bcbb] bg-[#eeeeee] font-['Roboto',sans-serif]">
      <div className="flex min-h-0 flex-1">
        {/* edge of the chat list with its scrollbar */}
        <div className="flex w-[3px] shrink-0 flex-col">
          <div className="h-[59px] shrink-0" />
          <div className="flex-1 bg-white pt-12">
            <div className="h-[80%] bg-[#cbcbcb]" />
          </div>
        </div>

        <main className="flex min-w-0 flex-1 flex-col border-l border-[#dbd8d6]">
          <header className="flex h-[60px] shrink-0 items-center border-b border-[#dad7d4] bg-[#eeeeee] pl-4 pr-[23px]">
            <Avatar />
            <div className="ml-[15px] min-w-0 flex-1">
              <h1 className="truncate text-[16px] leading-5 text-[#222222]">Ikmal Zikkacute</h1>
              <p className="truncate text-[13px] leading-[18px] text-[#858585]">last seen today at 12:12 AM</p>
            </div>
            <div className="flex gap-[26px] pb-1 text-[#828384]">
              <button type="button" aria-label="Attach"><ClipIcon /></button>
              <button type="button" aria-label="Menu"><MenuIcon /></button>
            </div>
          </header>

          <section className="relative min-h-0 flex-1 overflow-hidden bg-[#e5ddd6]">
            <Wallpaper />
            <div className="relative mr-[6px] flex flex-col gap-3 px-[86px]">
              {messageGroups.map((group, g) => (
                <div key={g} className="flex flex-col gap-[2px]">
                  {group.items.map((message, i) => (
                    <Bubble
                      key={i}
                      message={message}
                      mine={group.from === 'me'}
                      last={i === group.items.length - 1}
                    />
                  ))}
                </div>
              ))}
              <div className="h-[33px] w-28 self-end rounded-lg bg-[#dcf8c6]" />
            </div>

            <div className="absolute inset-x-0 top-2 mr-[6px] flex justify-center">
              <span className="rounded-lg bg-[#e1f2fa] px-[11px] pb-[2px] font-['Open_Sans',sans-serif] text-[13px] font-light leading-[30px] text-[#364850] shadow-[0_1px_1px_rgba(0,0,0,0.13)]">
                WEDNESDAY
              </span>
            </div>
            <div className="absolute inset-y-0 right-0 w-[6px] bg-white/10">
              <div className="mt-[324px] h-[92px] bg-black/20" />
            </div>
            <button
              type="button"
              aria-label="Scroll to bottom"
              className="absolute bottom-[17px] right-[11px] flex size-[42px] items-center justify-center rounded-full bg-white text-[#8b8b8b] shadow-[0_1px_3px_rgba(0,0,0,0.35)]"
            >
              <svg viewBox="0 0 20 20" className="size-5" fill="none" stroke="currentColor" strokeWidth="2.200" aria-hidden="true">
                <path d="M3.500 6.800L10 13.300 16.500 6.800" />
              </svg>
            </button>
          </section>

          <footer className="flex h-[62px] shrink-0 items-center bg-[#f4f0ed] px-[19px] text-[#8f8c8a]">
            <button type="button" aria-label="Emoji" className="pt-1"><SmileyIcon /></button>
            <input
              type="text"
              aria-label="Type a message"
              placeholder="Type a message"
              value={draft}
              onChange={(e) => setDraft(e.target.value)}
              className="mx-5 h-[42px] min-w-0 flex-1 rounded-[5px] bg-white px-[13px] text-[15px] text-[#4b4b4b] outline-none placeholder:text-[#999999]"
            />
            <button type="button" aria-label="Record voice message" className="ml-[6px] pt-1"><MicIcon /></button>
          </footer>
        </main>
      </div>
    </div>
  );
}
